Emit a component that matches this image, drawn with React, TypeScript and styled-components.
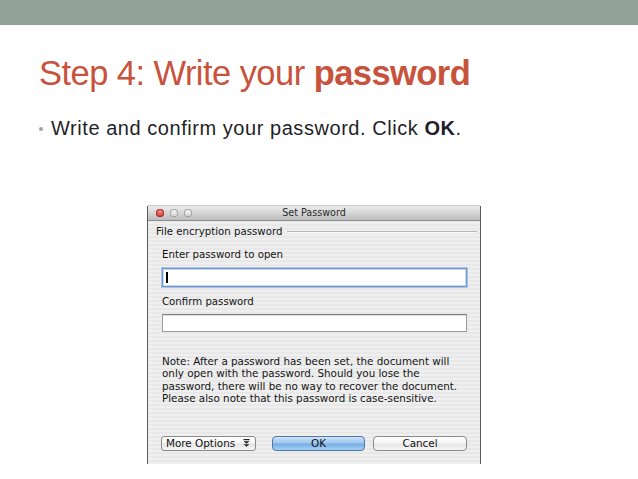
import React from "react";
import styled, { createGlobalStyle } from "styled-components";

const Global = createGlobalStyle`
  html, body { margin: 0; padding: 0; background: #ffffff; }
  body { width: 638px; height: 479px; overflow: hidden; }
`;

const Page = styled.div`
  width: 638px;
  height: 479px;
  display: flex;
  flex-direction: column;
  background: #fff;
`;

const TopBar = styled.div`
  height: 25px;
  flex: none;
  background: #92a299;
`;

const Content = styled.div`
  padding-left: 39px;
  display: flex;
  flex-direction: column;
`;

const Title = styled.h1`
  margin: 31px 0 0 0;
  font-family: "Liberation Sans", Arial, sans-serif;
  font-weight: 400;
  font-size: 34.5px;
  line-height: 34px;
  letter-spacing: -0.55px;
  color: #c8533d;
  white-space: nowrap;
  b { font-weight: 700; }
`;

const Bullet = styled.div`
  margin-top: 28px;
  display: flex;
  align-items: center;
  gap: 8px;
  font-family: "Liberation Sans", Arial, sans-serif;
  font-size: 20px;
  line-height: 20px;
  letter-spacing: 0.55px;
  color: #1f1f29;
  white-space: nowrap;
  b { font-weight: 700; }
`;

const Dot = styled.span`
  width: 4px;
  height: 4px;
  border-radius: 50%;
  background: #9aa5a0;
  flex: none;
  margin-top: 2px;
`;

const Dialog = styled.div`
  margin: 68px 0 0 108px;
  width: 332px;
  height: 258px;
  border-left: 1px solid #5a5a5a;
  border-right: 1px solid #5a5a5a;
  background: repeating-linear-gradient(180deg, #efefef 0 2px, #e8e8e8 2px 4px);
  display: flex;
  flex-direction: column;
  font-family: "DejaVu Sans", "Lucida Grande", sans-serif;
  color: #141414;
`;

const TitleBar = styled.div`
  height: 14px;
  flex: none;
  display: grid;
  grid-template-columns: 1fr auto 1fr;
  align-items: center;
  background: linear-gradient(180deg, #ececec 0%, #d6d6d6 50%, #bdbdbd 100%);
  border-bottom: 1px solid #8e8e8e;
  border-top: 1px solid #c9c9c9;
  margin-top: -1px;
`;

const Lights = styled.div`
  display: flex;
  gap: 6px;
  padding-left: 8px;
`;

const Light = styled.span<{ $red?: boolean }>`
  width: 8px;
  height: 8px;
  border-radius: 50%;
  background: ${(p) =>
    p.$red
      ? "radial-gradient(circle at 50% 35%, #f59a91 0%, #d8453a 55%, #a82c22 100%)"
      : "radial-gradient(circle at 50% 35%, #f4f4f4 0%, #d4d4d4 60%, #9d9d9d 100%)"};
  box-shadow: inset 0 0 0 0.5px ${(p) => (p.$red ? "#8e2a22" : "#8a8a8a")};
`;

const WinTitle = styled.span`
  font-size: 9.6px;
  line-height: 12px;
  color: #2a2a2a;
`;

const Body = styled.div`
  display: flex;
  flex-direction: column;
  padding: 0 3px 0 8px;
`;

const GroupHeader = styled.div`
  margin-top: 5px;
  display: flex;
  align-items: center;
  gap: 5px;
  font-size: 10.2px;
  line-height: 12px;
  white-space: nowrap;
  &::after {
    content: "";
    flex: 1;
    height: 0;
    border-top: 1px solid #b8b8b8;
    border-bottom: 1px solid #fafafa;
    margin-top: -1px;
  }
`;

const Section = styled.div`
  padding-left: 6px;
  display: flex;
  flex-direction: column;
`;

const Label = styled.div<{ $mt: number }>`
  margin-top: ${(p) => p.$mt}px;
  font-size: 10.2px;
  line-height: 12px;
  white-space: nowrap;
`;

const Field = styled.div<{ $focused?: boolean; $mt: number; $h: number }>`
  margin-top: ${(p) => p.$mt}px;
  width: 305px;
  height: ${(p) => p.$h}px;
  box-sizing: border-box;
  background: #fff;
  display: flex;
  align-items: center;
  padding-left: 3px;
  border: 1px solid ${(p) => (p.$focused ? "#6f97cc" : "#9c9c9c")};
  border-top-color: ${(p) => (p.$focused ? "#6f97cc" : "#7d7d7d")};
  box-shadow: ${(p) =>
    p.$focused ? "0 0 0 1px #a9c4e6, inset 0 0 0 1px #c7d9ef" : "inset 0 1px 0 #e2e2e2"};
`;

const Caret = styled.span`
  width: 1.5px;
  height: 11px;
  background: #000;
`;

const Note = styled.div`
  margin-top: 23px;
  font-size: 10.35px;
  line-height: 12.4px;
  white-space: nowrap;
`;

const ButtonRow = styled.div`
  margin-top: 31px;
  display: flex;
  align-items: center;
`;

const Button = styled.div<{ $primary?: boolean; $w: number; $ml: number }>`
  width: ${(p) => p.$w}px;
  margin-left: ${(p) => p.$ml}px;
  height: 15px;
  box-sizing: border-box;
  border-radius: 4px;
  border: 1px solid ${(p) => (p.$primary ? "#4f77a8" : "#8a8a8a")};
  background: ${(p) =>
    p.$primary
      ? "linear-gradient(180deg, #cfe3f8 0%, #9cc6ef 45%, #76aee6 55%, #a6d0f5 100%)"
      : "linear-gradient(180deg, #ffffff 0%, #f6f6f6 45%, #e6e6e6 55%, #f5f5f5 100%)"};
  display: flex;
  align-items: center;
  justify-content: center;
  font-size: 10.4px;
  line-height: 13px;
  color: #111;
`;

const PopupButton = styled(Button)`
  justify-content: space-between;
  padding: 0 5px 0 4px;
  border-radius: 3px;
`;

const PullIcon = () => (
  <svg width="7" height="8" viewBox="0 0 7 8">
    <rect x="0.5" y="0" width="6" height="1.2" fill="#222" />
    <path d="M0.5 2.3 L6.5 2.3 L3.5 4.8 Z" fill="#222" />
    <path d="M0.5 5.2 L6.5 5.2 L3.5 7.8 Z" fill="#222" />
  </svg>
);

export default function App() {
  return (
    <>
      <Global />
      <Page>
        <TopBar />
        <Content>
          <Title>
            Step 4: Write your <b>password</b>
          </Title>
          <Bullet>
            <Dot />
            <span>
              Write and confirm your password. Click <b>OK</b>.
            </span>
          </Bullet>
          <Dialog>
            <TitleBar>
              <Lights>
                <Light $red />
                <Light />
                <Light />
              </Lights>
              <WinTitle>Set Password</WinTitle>
              <span />
            </TitleBar>
            <Body>
              <GroupHeader>File encryption password</GroupHeader>
              <Section>
                <Label $mt={11}>Enter password to open</Label>
                <Field $focused $mt={7} $h={19}>
                  <Caret />
                </Field>
                <Label $mt={9}>Confirm password</Label>
                <Field $mt={6} $h={18} />
                <Note>
                  Note: After a password has been set, the document will
                  <br />
                  only open with the password. Should you lose the
                  <br />
                  password, there will be no way to recover the document.
                  <br />
                  Please also note that this password is case-sensitive.
                </Note>
                <ButtonRow>
                  <PopupButton $w={95} $ml={-1}>
                    <span>More Options</span>
                    <PullIcon />
                  </PopupButton>
                  <Button $primary $w={93} $ml={16}>
                    OK
                  </Button>
                  <Button $w={94} $ml={8}>
                    Cancel
                  </Button>
                </ButtonRow>
              </Section>
            </Body>
          </Dialog>
        </Content>
      </Page>
    </>
  );
}
